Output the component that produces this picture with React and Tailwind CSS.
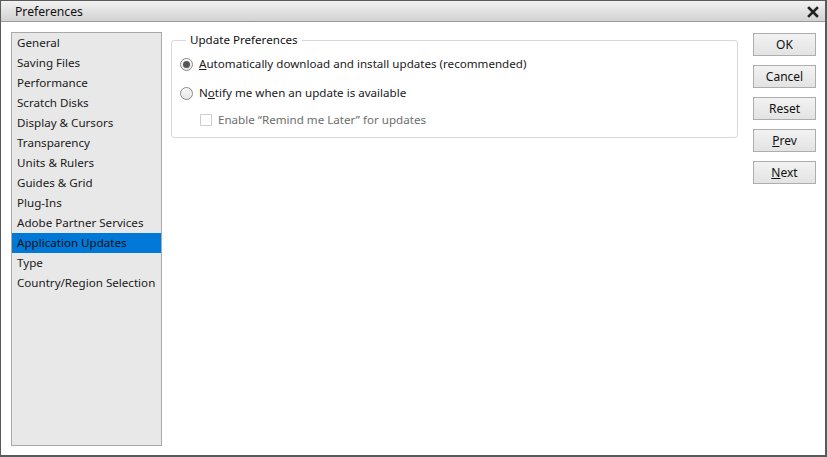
const categories = [
  "General",
  "Saving Files",
  "Performance",
  "Scratch Disks",
  "Display & Cursors",
  "Transparency",
  "Units & Rulers",
  "Guides & Grid",
  "Plug-Ins",
  "Adobe Partner Services",
  "Application Updates",
  "Type",
  "Country/Region Selection",
];

const font = { fontFamily: '"Noto Sans", "DejaVu Sans", sans-serif' };

export default function App() {
  return (
    <div
      className="w-[827px] h-[457px] bg-white border-l border-t border-r-2 border-b-2 border-[#5a5a5a] flex flex-col text-[11.6px] text-[#1a1a1a] overflow-hidden"
      style={font}
    >
      <TitleBar />
      <div className="flex flex-1 min-h-0">
        <CategoryList />
        <UpdatePanel />
        <ButtonColumn />
      </div>
    </div>
  );
}

function TitleBar() {
  return (
    <div className="h-[21px] shrink-0 flex items-center justify-between pl-[14px] pr-[6px] pt-[3px] bg-gradient-to-b from-[#f2f2f2] to-[#d2d2d2] border-b border-[#9a9a9a]">
      <span className="text-[12.2px] text-[#111]">Preferences</span>
      <svg width="12" height="12" viewBox="0 0 12 12" className="-mt-[1px]">
        <path d="M2 2 L10 10 M10 2 L2 10" stroke="#222" strokeWidth="2.6" strokeLinecap="square" />
      </svg>
    </div>
  );
}

function CategoryList() {
  return (
    <div className="ml-[10px] mt-[10px] mb-[9px] w-[151px] shrink-0 bg-[#e8e8e8] border border-[#a9a9a9]">
      {categories.map((name) => {
        const selected = name === "Application Updates";
        return (
          <div
            key={name}
            className={`h-[20px] leading-[20px] pl-[5px] whitespace-nowrap ${
              selected ? "bg-[#0078d7] text-[#111]" : ""
            }`}
          >
            {name}
          </div>
        );
      })}
    </div>
  );
}

function Radio({ checked }) {
  return (
    <span className="w-[13px] h-[13px] rounded-full border border-[#8a8a8a] bg-gradient-to-b from-[#fafafa] to-[#e6e6e6] flex items-center justify-center shrink-0">
      {checked && <span className="w-[7px] h-[7px] rounded-full bg-[#555]" />}
    </span>
  );
}

function UpdatePanel() {
  return (
    <div className="ml-[9px] mt-[10px] w-[567px] shrink-0 self-start">
      <fieldset className="border border-[#d8d8d8] rounded-[3px] px-0 pb-[9px] h-[106px]">
        <legend className="ml-[14px] px-[4px] leading-[16px] text-[#111]">Update Preferences</legend>
        <div className="flex items-center gap-[6px] pl-[8px] mt-[7px] h-[18px]">
          <Radio checked />
          <span>
            <span className="underline">A</span>utomatically download and install updates (recommended)
          </span>
        </div>
        <div className="flex items-center gap-[6px] pl-[8px] mt-[11px] h-[18px]">
          <Radio />
          <span>
            N<span className="underline">o</span>tify me when an update is available
          </span>
        </div>
        <div className="flex items-center gap-[6px] pl-[28px] mt-[9px] h-[18px] text-[#6d6d6d]">
          <span className="w-[12px] h-[12px] border border-[#cfcfcf] bg-white shrink-0" />
          <span>Enable “Remind me Later” for updates</span>
        </div>
      </fieldset>
    </div>
  );
}

function DialogButton({ children }) {
  return (
    <button className="w-[63px] h-[23px] border border-[#adadad] bg-gradient-to-b from-[#f2f2f2] to-[#e3e3e3] text-[12px] text-[#111] leading-none">
      {children}
    </button>
  );
}

function ButtonColumn() {
  return (
    <div className="ml-[15px] mt-[11px] flex flex-col gap-[9px]">
      <DialogButton>OK</DialogButton>
      <DialogButton>Cancel</DialogButton>
      <DialogButton>Reset</DialogButton>
      <DialogButton>
        <span className="underline">P</span>rev
      </DialogButton>
      <DialogButton>
        <span className="underline">N</span>ext
      </DialogButton>
    </div>
  );
}
